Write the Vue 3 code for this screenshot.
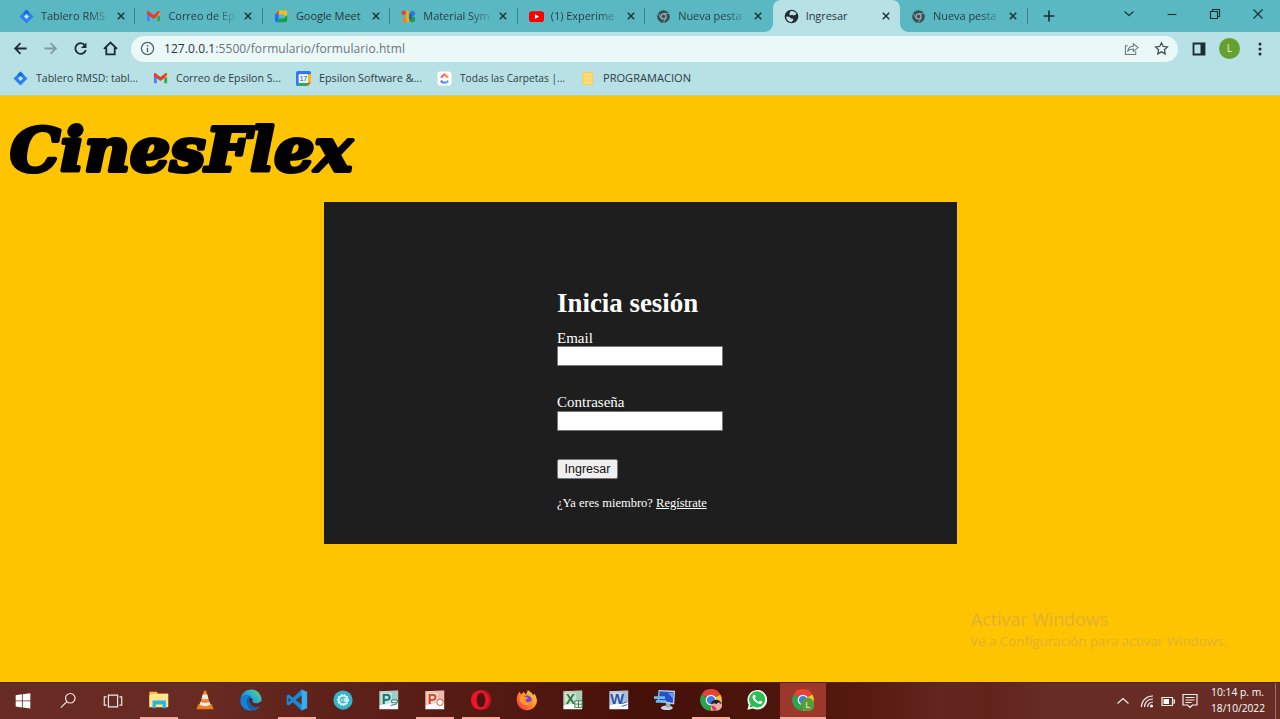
<script setup>
const tabs = [
  { icon: 'jira', title: 'Tablero RMS', sep: true },
  { icon: 'gmail', title: 'Correo de Ep', sep: true },
  { icon: 'meet', title: 'Google Meet', sep: true },
  { icon: 'symbols', title: 'Material Sym', sep: true },
  { icon: 'youtube', title: '(1) Experime', sep: true },
  { icon: 'chrome', title: 'Nueva pesta' },
  { icon: 'globe', title: 'Ingresar', active: true },
  { icon: 'chrome', title: 'Nueva pesta', sep: true },
]
const bookmarks = [
  { icon: 'jira', title: 'Tablero RMSD: tabl...', w: 102 },
  { icon: 'gmail', title: 'Correo de Epsilon S...', w: 105 },
  { icon: 'calendar', title: 'Epsilon Software &...', w: 103 },
  { icon: 'clickup', title: 'Todas las Carpetas |...', w: 105 },
  { icon: 'folder', title: 'PROGRAMACION', w: 88 },
]
const apps = [
  { icon: 'explorer', open: true },
  { icon: 'vlc' },
  { icon: 'edge' },
  { icon: 'vscode', open: true },
  { icon: 'gear' },
  { icon: 'publisher' },
  { icon: 'powerpoint', open: true },
  { icon: 'opera', open: true },
  { icon: 'firefox' },
  { icon: 'excel' },
  { icon: 'word' },
  { icon: 'remote' },
  { icon: 'chromeA', open: true },
  { icon: 'whatsapp' },
  { icon: 'chromeL', open: true, active: true },
]
</script>

<template>
  <div class="screen">
    <svg class="defs" width="0" height="0">
      <defs>
        <linearGradient id="g-edge" x1="0" y1="1" x2="1" y2="0"><stop offset="0" stop-color="#0a5fc0" /><stop offset=".5" stop-color="#1b9de2" /><stop offset="1" stop-color="#5fe07a" /></linearGradient>
        <linearGradient id="g-fire" x1="1" y1="0" x2="0" y2="1"><stop offset="0" stop-color="#ffe14a" /><stop offset=".5" stop-color="#ff8a1f" /><stop offset="1" stop-color="#f0245c" /></linearGradient>
        <linearGradient id="g-click" x1="0" y1="0" x2="1" y2="0"><stop offset="0" stop-color="#7b5cff" /><stop offset="1" stop-color="#38b6ff" /></linearGradient>
        <symbol id="jira" viewBox="0 0 16 16"><path d="M8 .5 15.5 8 8 15.5.5 8Z" fill="#2a80f4" /><path d="M8 .5 11.2 3.7 8 7 4.8 3.7Z" fill="#176be0" /><path d="M8 5.3 10.7 8 8 10.7 5.3 8Z" fill="#c8e8f5" /></symbol>
        <symbol id="gmail" viewBox="0 0 16 16"><path d="M1 3.5V13h3V7.2Z" fill="#4285f4" /><path d="M15 3.5V13h-3V7.2Z" fill="#34a853" /><path d="M12 4.5 15 2.5V6l-3 2.3Z" fill="#fbbc04" /><path d="M1 2.8C1.5 2 2.500 2 3.200 2.600L8 6.300l4.800-3.700c.8-.6 2-.5 2.200.6L12 7.600 8 10.700 1 5.500Z" fill="#e83c32" /></symbol>
        <symbol id="meet" viewBox="0 0 16 16"><path d="M5 1.500h7.500c1 0 1.500.5 1.500 1.500v4l-3 2V5.500H5Z" fill="#f7bd12" /><path d="M5 1.500v4H1Z" fill="#ea4335" /><path d="M1 5.500h4V14H3c-1.200 0-2-.8-2-2Z" fill="#1a73e8" /><path d="M5 10h5l4-3.500V12c0 1.300-.8 2-2 2H5Z" fill="#13a04a" /></symbol>
        <symbol id="symbols" viewBox="0 0 16 16"><circle cx="3" cy="4" r="2.500" fill="#ea4335" /><path d="M5.500 2h3v12h-3Z" fill="#f9ab00" /><path d="M2 9h3.500v5H2Z" fill="#f57c22" /><rect x="9.500" y="2" width="5.500" height="5.500" rx="2.500" fill="#3074e8" /><circle cx="12" cy="11" r="3.200" fill="#249a50" /><path d="M8.500 5h3v6h-3Z" fill="#1c65c9" /></symbol>
        <symbol id="youtube" viewBox="0 0 16 16"><rect x="0" y="2.400" width="16" height="11.400" rx="3" fill="#f00" /><path d="m6.300 5.500 4.500 2.600-4.500 2.600Z" fill="#fff" /></symbol>
        <symbol id="chrome" viewBox="0 0 16 16"><circle cx="8" cy="8" r="6.800" fill="#3e5056" /><path d="M8 4.800h6M5.200 9.600 2.300 4.600M10.800 9.600 7.900 14.600" stroke="#83b9bf" stroke-width=".8" /><circle cx="8" cy="8" r="3.300" fill="#9ec4c8" /><circle cx="8" cy="8" r="2.100" fill="#3e5056" /></symbol>
        <symbol id="globe" viewBox="0 0 16 16"><circle cx="8" cy="8" r="7.300" fill="#202c32" /><path d="M7 2.200c2.500-.6 5 .4 6.300 2.600L12 6.500 10 7 8.500 6.200 7 7 5.500 5.500ZM2.300 8l3.200.3L7.500 10 10 10.500 9.500 12.500 7.500 14C4.500 13.800 2.400 11.200 2.300 8Z" fill="#b9e0e3" /></symbol>
        <symbol id="calendar" viewBox="0 0 16 16"><path d="M0 2C0 .8.8 0 2 0h12c1.200 0 2 .8 2 2v2H0Z" fill="#3478ee" /><path d="M0 3h3v13H2c-1.200 0-2-.8-2-2Z" fill="#3478ee" /><path d="M12.500 3.500H16v9h-3.500Z" fill="#fbbc04" /><path d="M3 12.500h9.500V16H3Z" fill="#31a853" /><path d="M12.500 12.500H16L12.500 16Z" fill="#ea4335" /><path d="M3 3.500h9.500v9H3Z" fill="#fff" /><text x="4" y="10.600" font-size="7" font-weight="700" font-family="Liberation Sans, sans-serif" fill="#3478ee">17</text></symbol>
        <symbol id="clickup" viewBox="0 0 16 16"><rect x=".5" y=".5" width="15" height="15" rx="3" fill="#fff" /><path d="m4.200 7 3.800-3.300L11.800 7" fill="none" stroke="#f4589f" stroke-width="2.200" /><path d="m8 3.700 3.800 3.300" stroke="#ffa22b" stroke-width="2.200" /><path d="M4 10.400c2.200 2.800 5.800 2.800 8 0" fill="none" stroke="url(#g-click)" stroke-width="2.200" /></symbol>
        <symbol id="folder" viewBox="0 0 16 16"><rect x="2.500" y="1" width="11.500" height="14" rx="1" fill="#fbdc75" /><path d="M3 1.500h10.500v13H3Z" fill="none" stroke="#efc860" stroke-width=".8" /><path d="M4 6h8.500M4 10h8.500" stroke="#f1cd67" stroke-width=".6" /></symbol>
        <symbol id="explorer" viewBox="0 0 24 24"><path d="M1.500 3h8l1.500 2H22v14H1.500Z" fill="#f3bd3d" /><path d="M3 5.500h19V20H1.500V7Z" fill="#ffe58b" /><path d="M5 12.500h14.500V21H16v-4H8.500v4H5Z" fill="#24b6e8" /></symbol>
        <symbol id="vlc" viewBox="0 0 24 24"><path d="M5 16h14l2.500 6h-19Z" fill="#ef7c14" /><path d="M10.800 2h2.400l4.800 16c-3 2.300-9 2.300-12 0Z" fill="#f28318" /><path d="m9.600 6-1.400 4.500c2 1 5.600 1 7.600 0L14.400 6ZM7.200 14l-1 3c3 2.500 8.600 2.500 11.600 0l-1-3c-2.500 1.500-7 1.500-9.600 0Z" fill="#e9eaeb" /></symbol>
        <symbol id="edge" viewBox="0 0 24 24"><circle cx="12" cy="12" r="11.500" fill="url(#g-edge)" /><path d="M.5 13C2 6 8 6 10.500 7.500 14 9.500 9 12 10 15.500c1 4 7 5.500 12 2.500-4 7-21 8-21.500-5Z" fill="#1260b4" /><path d="M10.500 15c-2-5 2-6.500 3-4.300.6 1.300-.8 2.600.8 4 1.500 1.500 7 1 9-2l1 5-2.300.3c-4 3-10 2-11.500-3Z" fill="#5f231b" /><path d="M.5 13c1-5 7-7 10-5.200-4 1.500-5 9.200 1.500 15.500C5 24 .5 18 .5 13Z" fill="#1581d2" /></symbol>
        <symbol id="vscode" viewBox="0 0 24 24"><path d="M17 .5 23 3.400v17.200L17 23.500 7.500 14.500 3 18 .8 16.800V7.200L3 6l4.500 3.500Z" fill="#168bd8" /><path d="M17 .5 23 3.400v17.200l-6 2.900Z" fill="#36acf2" /><path d="M17 7v10l-6.500-5ZM2.800 9.500v5L5.300 12Z" fill="#622a22" /></symbol>
        <symbol id="gear" viewBox="0 0 24 24"><circle cx="12" cy="12" r="10.500" fill="#35b4ca" /><circle cx="12" cy="12" r="5.700" fill="#c4edf2" stroke="#e7fafa" stroke-width="1.500" stroke-dasharray="2 1.400" /><path d="M14.500 10a3 3 0 1 0 0 4M12 9v6" fill="none" stroke="#42b4c6" stroke-width="1.300" /></symbol>
        <symbol id="office" viewBox="0 0 24 24"><path d="M1.500 2.500 22 1.500V22H1.500Z" fill="#fff" /><path d="M1.500 3 22 1.500V14L1.500 18Z" fill="currentColor" opacity=".38" /><path d="M3 4h12v13H3Z" fill="#fff" opacity=".45" /></symbol>
        <symbol id="opera" viewBox="0 0 24 24"><circle cx="12" cy="12" r="11" fill="#ed1527" /><ellipse cx="12" cy="12" rx="4.700" ry="8" fill="#49150e" /><path d="M15 4c8 1.500 8 14.500 0 16 6 1.500 8-4 8-8s-2-9.500-8-8Z" fill="#b41224" /></symbol>
        <symbol id="firefox" viewBox="0 0 24 24"><path d="m2 6 1.600-3L6 6l2-3 3 3 2-5c4 3 5 4 6 6l1-2c3 5 3.500 8 2 11.500A11 11 0 0 1 1 14C.5 10 1 8 2 6Z" fill="url(#g-fire)" /><circle cx="12" cy="12.500" r="5.500" fill="#7c42d8" /><path d="M7 6c0 3 6 2 6.500 4.500-2-.5-4 1-2.500 3s5 1 6.500-2C18 18 11 20 6.500 15.500S4.500 8 7 6Z" fill="#ff9926" /></symbol>
        <symbol id="remote" viewBox="0 0 24 24"><ellipse cx="14" cy="20.500" rx="6.500" ry="2.500" fill="#cad5df" /><path d="M13 15h5v5h-5Z" fill="#95aab9" /><path d="m5 1 18 1-1 15-18-3Z" fill="#bdd4ef" /><path d="m6 2.500 15.500 1-1 11.700L5.500 12Z" fill="#2450c8" /><path d="M0 8h12v3H0Zm2 4h11v3H2Z" fill="#6eb9e9" /><path d="m15 4 6 .4-.5 6Z" fill="#609cf2" /></symbol>
        <symbol id="chromeC" viewBox="0 0 24 24"><path d="M12 12 1.800 6.100A11.700 11.700 0 0 1 22.200 6.100Z" fill="#e64435" /><path d="M12 12 22.200 6.100A11.700 11.700 0 0 1 12 23.700Z" fill="#fcc72c" /><path d="M12 12v11.700A11.700 11.700 0 0 1 1.800 6.100Z" fill="#2ba24c" /><circle cx="12" cy="12" r="5.800" fill="#fff" /><circle cx="12" cy="12" r="4.500" fill="#3b7de9" /></symbol>
        <symbol id="whatsapp" viewBox="0 0 24 24"><path d="M1.500 22.500 3 17A10.700 10.700 0 1 1 7.500 21.300Z" fill="#fff" /><path d="M3.800 20.200 5 16.500A8.800 8.800 0 1 1 8.200 19.200Z" fill="#2ebd50" /><path d="M8 6.500c1-1 2-.2 2.600 2 .2.700-.8 1-.8 1.600 1 2 2.300 3 4 3.800.8 0 1-1.300 1.700-1.200 2.200.8 2.900 1.300 1.900 2.600-1.500 2-4.500.8-6.700-1C8 12 6 8.500 8 6.500Z" fill="#fff" /></symbol>
      </defs>
    </svg>

    <header class="browser">
      <div class="tabstrip">
        <div v-for="(t, i) in tabs" :key="i" class="tab" :class="{ active: t.active, sep: t.sep }">
          <svg class="fav" viewBox="0 0 16 16"><use :href="'#' + t.icon" /></svg>
          <span class="tab-title" :class="{ fade: t.title.length > 10 && t.icon !== 'meet' }">{{ t.title }}</span>
          <svg class="close" viewBox="0 0 8 8"><path d="m.8.8 6.400 6.400M7.200.8.8 7.200" /></svg>
        </div>
        <svg class="plus" viewBox="0 0 12 12"><path d="M6 .5v11M.5 6h11" /></svg>
        <div class="window-controls">
          <svg viewBox="0 0 12 12"><path d="m1.500 3.500 4.500 4 4.500-4" /></svg>
          <svg viewBox="0 0 12 12"><path d="M1.500 6.500h9" /></svg>
          <svg viewBox="0 0 12 12"><path d="M1.500 3.500h7v7h-7ZM3.500 3V1.500h7v7H9" /></svg>
          <svg viewBox="0 0 12 12"><path d="m1.500 1.500 9 9M10.500 1.500l-9 9" /></svg>
        </div>
      </div>

      <div class="toolbar">
        <svg class="nav" viewBox="0 0 16 16"><path d="M14.500 8H2.500M8 2.300 2.300 8 8 13.700" /></svg>
        <svg class="nav dim" viewBox="0 0 16 16"><path d="M1.500 8h12M8 2.300 13.700 8 8 13.700" /></svg>
        <svg class="nav" viewBox="0 0 16 16"><path d="M12.700 4.500A5.700 5.700 0 1 0 13.700 9.500" /><path d="M14.300 1.500v6H8.500Z" class="fill" /></svg>
        <svg class="nav" viewBox="0 0 16 16"><path d="M1 8.500 8 1.700l7 6.800M3.500 7v7.300h9V7" /></svg>
        <div class="omnibox">
          <svg class="info" viewBox="0 0 16 16"><circle cx="8" cy="8" r="6.500" /><path d="M8 7.200V12M8 4.200v1.600" /></svg>
          <span class="url"><b>127.0.0.1</b>:5500/formulario/formulario.html</span>
          <svg class="share" viewBox="0 0 16 16"><path d="M4 5H1.500v9.500h11V11M4 10.500c.5-3.500 2.500-5 6-5V3l5 4-5 4V8.500c-2.500 0-4 .2-6 2Z" /></svg>
          <svg class="star" viewBox="0 0 16 16"><path d="m8 1.800 1.900 4 4.400.5-3.200 3 .8 4.500L8 11.600l-3.900 2.200.8-4.500-3.200-3 4.400-.5Z" /></svg>
        </div>
        <svg class="panel" viewBox="0 0 14 14"><path d="M1.500 1.500h11v11h-11Z" /><path d="M8.500 1H13v12H8.500Z" class="fill" /></svg>
        <span class="avatar">L</span>
        <svg class="dots" viewBox="0 0 4 14"><circle cx="2" cy="2" r="1.500" /><circle cx="2" cy="7" r="1.500" /><circle cx="2" cy="12" r="1.500" /></svg>
      </div>

      <nav class="bookmarks">
        <a v-for="b in bookmarks" :key="b.title" class="bookmark">
          <svg class="bicon" viewBox="0 0 16 16"><use :href="'#' + b.icon" /></svg>
          <svg class="blabel" :style="{ width: b.w + 'px' }"><text x="0" y="12" :textLength="b.w" lengthAdjust="spacingAndGlyphs">{{ b.title }}</text></svg>
        </a>
      </nav>
    </header>

    <main class="page">
      <svg class="logo" viewBox="0 0 352 70"><text x="4" y="57" textLength="342" lengthAdjust="spacingAndGlyphs">CinesFlex</text></svg>
      <section class="card">
        <form class="login" @submit.prevent>
          <h1>Inicia sesión</h1>
          <label for="email" class="first">Email</label>
          <input id="email" type="email" />
          <label for="pass">Contraseña</label>
          <input id="pass" type="password" />
          <button>Ingresar</button>
          <small>¿Ya eres miembro? <a>Regístrate</a></small>
        </form>
      </section>
      <svg class="watermark" viewBox="0 0 270 50">
        <text x="1" y="21" font-size="18.500" textLength="137" lengthAdjust="spacingAndGlyphs">Activar Windows</text>
        <text x="0" y="41" font-size="13.300" textLength="257" lengthAdjust="spacingAndGlyphs">Ve a Configuración para activar Windows.</text>
      </svg>
    </main>

    <footer class="taskbar">
      <div class="sys"><svg viewBox="0 0 24 24"><path class="solid" d="m4 5.700 6.800-1v6.700H4Zm7.700-1.100L20 3.500v7.900h-8.300ZM4 12.400h6.800v6.700l-6.800-1Zm7.700 0H20v7.900l-8.300-1.100Z" /></svg></div>
      <div class="sys"><svg viewBox="0 0 24 24"><circle cx="14.500" cy="9" r="5.200" /><path d="m10.800 12.700-6.600 6.600" /></svg></div>
      <div class="sys"><svg viewBox="0 0 24 24"><path d="M7 5.500h10v13H7ZM5 7.500H2.500v9H5M19 7.500h2.500v9H19" /></svg></div>
      <div v-for="a in apps" :key="a.icon" class="app" :class="{ open: a.open, active: a.active }">
        <svg v-if="['publisher', 'powerpoint', 'excel', 'word'].includes(a.icon)" viewBox="0 0 24 24" :class="a.icon">
          <use href="#office" />
          <text v-if="a.icon === 'publisher'" x="4" y="16">P</text>
          <text v-else-if="a.icon === 'powerpoint'" x="4" y="16">P</text>
          <text v-else-if="a.icon === 'excel'" x="4" y="16">X</text>
          <text v-else x="2.500" y="16" textLength="15" lengthAdjust="spacingAndGlyphs">W</text>
          <path v-if="a.icon === 'publisher'" d="M15 12h6v3h-6ZM14 18l7-2" class="mark" />
          <circle v-else-if="a.icon === 'powerpoint'" cx="17.500" cy="14.500" r="3.500" class="mark" />
          <path v-else-if="a.icon === 'excel'" d="M14 13h8v7h-8ZM14 16.500h8M18 13v7" class="mark" />
          <path v-else d="m15 16 6-2M15 19l6-2" class="mark" />
        </svg>
        <svg v-else-if="a.icon === 'chromeA'" viewBox="0 0 24 24"><use href="#chromeC" /><circle cx="18" cy="17.500" r="6.200" fill="#e9ada4" /><path d="M12 16.500c0-6 10-7 11.500 0l-3.500-2-2 2-2-1Z" fill="#27212c" /><path d="m12.500 18 4 1 2 4.500c-3.500.5-6-2-6-5.500Z" fill="#db3476" /></svg>
        <svg v-else-if="a.icon === 'chromeL'" viewBox="0 0 24 24"><use href="#chromeC" /><circle cx="17" cy="17" r="7.500" fill="#5c9b36" /><text x="14.800" y="20.500" class="l">L</text></svg>
        <svg v-else viewBox="0 0 24 24"><use :href="'#' + a.icon" /></svg>
      </div>
      <div class="tray">
        <svg class="t1" viewBox="0 0 14 14"><path d="m1.500 9.500 5.500-5 5.500 5" /></svg>
        <svg class="t2" viewBox="0 0 14 14"><path d="M1.500 13A11 11 0 0 1 13 2M4.500 13A8 8 0 0 1 13 5M7.500 13A5.300 5.300 0 0 1 13 8" /><circle cx="11.500" cy="12" r="1.500" class="solid" /></svg>
        <svg class="t3" viewBox="0 0 14 12"><path d="M1 2.500h10.500v8H1ZM12 5h1.500v3H12" /><path d="M2.500 4H8v5H2.500Z" class="solid" /></svg>
        <svg class="t4" viewBox="0 0 16 16"><path d="M1 1.500h14v10.500h-4.500L8 14.500 5.500 12H1ZM3.500 4.500h9M3.500 7h9M3.500 9.500h6" /></svg>
        <div class="clock">
          <svg viewBox="0 0 55 32"><text x="0" y="11" textLength="53" lengthAdjust="spacingAndGlyphs">10:14 p. m.</text><text x="0" y="26.500" textLength="54" lengthAdjust="spacingAndGlyphs">18/10/2022</text></svg>
        </div>
        <i class="peek"></i>
      </div>
    </footer>
  </div>
</template>

<style>
html, body { margin: 0; overflow: hidden; }
</style>

<style scoped>
.screen { width: 1280px; height: 719px; display: flex; flex-direction: column; overflow: hidden; font-family: "Open Sans", "Noto Sans", sans-serif; color: #26383f; }
.screen * { box-sizing: border-box; }
.defs { position: absolute; }
svg { display: block; flex: none; }

.browser { height: 96px; flex: none; background: #b7e1e5; border-bottom: 1px solid #b9ce9d; }
.tabstrip { height: 32px; display: flex; align-items: center; background: #5ab8c2; padding-left: 8px; }
.tab { position: relative; width: 127.450px; height: 32px; flex: none; display: flex; align-items: center; padding: 0 8px 0 11px; }
.tab.sep::after { content: ""; position: absolute; right: 0; top: 8px; width: 1px; height: 16px; background: #39818b; }
.tab.active { background: #b7e1e5; border-radius: 8px 8px 0 0; }
.tab.active::before, .tab.active::after { content: ""; position: absolute; bottom: 0; width: 8px; height: 8px; }
.tab.active::before { left: -8px; background: radial-gradient(circle at 0 0, transparent 7.500px, #b7e1e5 8px); }
.tab.active::after { right: -8px; background: radial-gradient(circle at 100% 0, transparent 7.500px, #b7e1e5 8px); }
.fav { width: 15px; height: 15px; margin-right: 7px; }
.tab-title { width: 67px; white-space: nowrap; font-size: 11px; letter-spacing: -0.050px; line-height: 16px; }
.tab-title.fade { color: transparent; background: linear-gradient(90deg, #26383f 48px, #26383f26 67px); background-clip: text; }
.close { width: 8px; height: 8px; margin-left: 9px; fill: none; stroke: #1f333b; stroke-width: 1.500; }
.plus { width: 12px; height: 12px; margin-left: 15px; fill: none; stroke: #1b2c33; stroke-width: 1.600; }
.window-controls { margin-left: auto; display: flex; gap: 31px; padding: 0 16px 5px 0; }
.window-controls svg { width: 12px; height: 12px; fill: none; stroke: #1b2c33; stroke-width: 1.100; }

.toolbar { height: 33px; display: flex; align-items: center; padding-left: 13px; }
.nav { width: 15px; height: 15px; margin-right: 15px; fill: none; stroke: #1d2c33; stroke-width: 1.900; }
.nav.dim { stroke: #7e9ea4; }
.nav .fill, .panel .fill { fill: #1d2c33; stroke: none; }
.omnibox { width: 1047px; height: 26px; margin-left: -2px; border-radius: 13px; background: #ebf8f8; display: flex; align-items: center; padding: 0 9px 0 8px; }
.info { width: 15px; height: 15px; fill: none; stroke: #52636a; stroke-width: 1.400; margin: 0 9px 0 1px; }
.url { font-size: 12px; letter-spacing: 0.075px; color: #69767b; white-space: nowrap; }
.url b { font-weight: 400; color: #28363c; }
.share { width: 15px; height: 15px; margin-left: auto; fill: none; stroke: #65767b; stroke-width: 1.100; }
.star { width: 15px; height: 15px; margin-left: 15px; fill: none; stroke: #44545b; stroke-width: 1.400; }
.panel { width: 14px; height: 14px; margin-left: 14px; fill: none; stroke: #1d2c33; stroke-width: 1.800; }
.avatar { width: 21px; height: 21px; margin-left: 13px; border-radius: 50%; background: #65a031; color: #e5f2d9; font-size: 10.500px; line-height: 21px; text-align: center; }
.dots { width: 4px; height: 14px; margin-left: 18px; fill: #1d2c33; }

.bookmarks { height: 26px; display: flex; align-items: center; padding-left: 13px; }
.bookmark { display: flex; align-items: center; margin-right: 15px; }
.bicon { width: 15px; height: 15px; margin-right: 8px; }
.blabel { height: 16px; overflow: visible; font-size: 11px; fill: #2c4047; }

.page { position: relative; height: 586px; flex: none; background: #ffc400; padding-top: 18px; }
.logo { width: 352px; height: 70px; margin-left: 6px; overflow: visible; }
.logo text { font-family: "DejaVu Serif", serif; font-weight: 700; font-style: italic; font-size: 59px; fill: #000; stroke: #000; stroke-width: 4px; stroke-linejoin: round; }
.card { width: 633px; height: 342px; margin: 18px 0 0 324px; background: #1e1e1e; }
.login { display: flex; flex-direction: column; align-items: flex-start; padding: 85px 0 0 233px; font-family: "Liberation Serif", serif; color: #fff; }
h1 { margin: 0 0 10px; font-size: 26.900px; line-height: 32px; white-space: nowrap; }
label { font-size: 15px; line-height: 17px; height: 17px; }
label.first { line-height: 19px; }
input { width: 166px; height: 20px; margin: 0 0 27.500px; padding: 0; background: #fff; border: 1px solid #777; border-radius: 1px; }
button { width: 61px; height: 20px; margin: 1px 0 15.500px; padding: 0; border: 1px solid #777; border-radius: 2px; background: #efefef; color: #111; font: 12.500px "Liberation Sans", sans-serif; }
small { font-size: 12.500px; line-height: 16px; white-space: nowrap; }
small a { text-decoration: underline; }
.watermark { position: absolute; left: 970px; top: 509px; width: 270px; height: 50px; fill: #dfb037; }

.taskbar { height: 37px; flex: none; display: flex; background: linear-gradient(90deg, #672b23 0, #672b23 200px, #5e2119 330px, #541b13 480px, #451008 640px, #4d160d 780px, #55190f 860px, #62261e 940px, #62231b 990px, #672d24 1050px, #672d24 100%); border-top: 1px solid #54200d; }
.sys { width: 45px; height: 35px; display: grid; place-items: center; }
.sys svg { width: 22px; height: 22px; fill: none; stroke: #f3e9e7; stroke-width: 1.300; }
.sys .solid { fill: #fff; stroke: none; }
.app { position: relative; width: 46px; height: 36px; padding-bottom: 2px; display: grid; place-items: center; }
.app:nth-child(4) { margin-left: 1px; }
.app > svg { width: 22px; height: 22px; }
.app.open::after { content: ""; position: absolute; left: 4px; right: 4px; bottom: 0; height: 2px; background: #f7ada2; }
.app.active { background: #9c382b; }
.app.active::after { left: 0; right: 0; }
.app text { font: 700 15px "Liberation Sans", sans-serif; fill: currentColor; }
.app text.l { font-size: 9px; font-weight: 400; fill: #e8f5df; }
.mark { fill: #fff; stroke: currentColor; stroke-width: 1; }
.publisher { color: #0b796d; }
.powerpoint { color: #cf4923; }
.excel { color: #28783b; }
.word { color: #2754a5; }
.tray { margin-left: auto; display: flex; align-items: center; height: 35px; }
.tray svg { fill: none; stroke: #f5eeec; stroke-width: 1.200; }
.tray .solid { fill: #fff; stroke: none; }
.t1 { width: 14px; height: 14px; margin-right: 10px; }
.t2 { width: 14px; height: 14px; margin-right: 7px; }
.t3 { width: 14px; height: 12px; margin-right: 7px; }
.t4 { width: 16px; height: 16px; margin-right: 13px; }
.tray .clock svg { width: 55px; height: 32px; overflow: visible; fill: #fff; stroke: none; font-size: 11px; }
.peek { width: 1px; height: 36px; margin: 0 4px 0 9px; background: #9c746e; }
</style>
